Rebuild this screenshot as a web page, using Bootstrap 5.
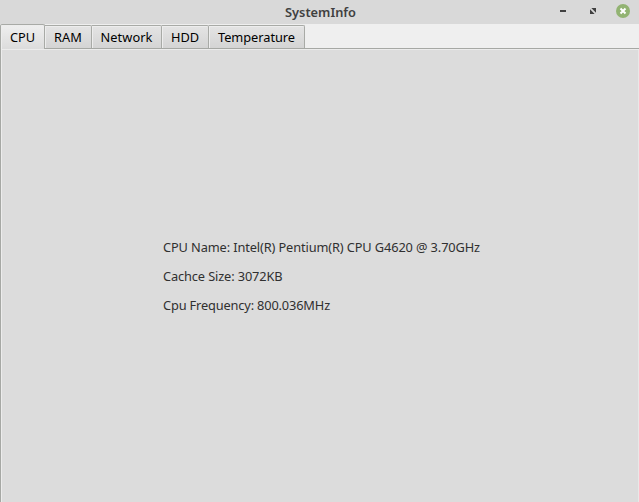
<!DOCTYPE html>
<html lang="en">
<head>
<meta charset="utf-8">
<meta name="viewport" content="width=device-width, initial-scale=1">
<title>SystemInfo</title>
<link href="https://cdn.jsdelivr.net/npm/bootstrap@5.3.0/dist/css/bootstrap.min.css" rel="stylesheet">
<style>
body{font-family:"Noto Sans","Open Sans",sans-serif;font-size:12.8px;line-height:17px;background:#dcdcdc;color:#303030;overflow:hidden}
.titlebar{height:24px;flex:none;background:#d9d9d9;display:grid;grid-template-columns:1fr auto 1fr;padding-left:2px}
.titlebar h1{font-size:12.8px;line-height:24px;font-weight:600;color:#404040}
.window-controls svg{display:block}
.app-tabs{height:25px;flex:none;background:#efefef;border-bottom:1px solid #a6a8a4}
.app-tabs .nav-link{height:23px;margin:1px 0 0;padding:0;border:1px solid #a8aaa6;border-left-width:0;border-bottom:0;border-radius:0 2px 0 0;color:#000;text-align:center;line-height:23px;background:linear-gradient(#e4e4e4,#d4d4d4);box-shadow:inset 1px 1px #ededed;white-space:nowrap}
.app-tabs .nav-link.active{height:25px;margin:0;border:1px solid #a8aaa6;border-bottom:0;border-radius:2px 2px 0 0;color:#000;background:linear-gradient(#efefef,#dcdcdc);line-height:25px;position:relative}
.w-cpu{width:45px}.w-ram{width:47px}.w-network{width:70px}.w-hdd{width:47px}.w-temperature{width:96px}
.info-pane{border-left:1px solid #a6a8a4;box-shadow:inset 1px 1px #ececec,inset -1px 0 #e8e8e8;padding:190px 0 0 162px}
.info-pane p{white-space:nowrap;margin:0 0 12px}
</style>
<script src="https://cdn.jsdelivr.net/npm/bootstrap@5.3.0/dist/js/bootstrap.bundle.min.js"></script>
</head>
<body class="d-flex flex-column vh-100">
<header class="titlebar">
  <span></span>
  <h1 class="m-0"><span class="fit" data-w="71">SystemInfo</span></h1>
  <div class="window-controls d-flex justify-content-end">
    <svg width="99" height="24" viewBox="0 0 99 24" role="img" aria-label="Window controls">
      <rect x="20" y="10" width="6" height="2" fill="#404040"/>
      <path d="M51.300 8H56v4.700zM50 9.300l4.700 4.700H50z" fill="#404040"/>
      <circle cx="83" cy="11" r="7" fill="#92b372"/>
      <path d="m80.500 8.500 5 5m0-5-5 5" stroke="#fff" stroke-width="2" fill="none"/>
    </svg>
  </div>
</header>
<nav>
  <div class="nav app-tabs flex-nowrap align-items-start" role="tablist">
    <button class="nav-link active w-cpu" role="tab"><span class="fit" data-w="25">CPU</span></button>
    <button class="nav-link w-ram" role="tab"><span class="fit" data-w="28">RAM</span></button>
    <button class="nav-link w-network" role="tab"><span class="fit" data-w="52">Network</span></button>
    <button class="nav-link w-hdd" role="tab"><span class="fit" data-w="28">HDD</span></button>
    <button class="nav-link w-temperature" role="tab"><span class="fit" data-w="77">Temperature</span></button>
  </div>
</nav>
<main class="info-pane flex-grow-1 d-flex flex-column align-items-start">
  <p><span class="fit" data-w="317">CPU Name: Intel(R) Pentium(R) CPU G4620 @ 3.70GHz</span></p>
  <p><span class="fit" data-w="119.5">Cachce Size: 3072KB</span></p>
  <p><span class="fit" data-w="167">Cpu Frequency: 800.036MHz</span></p>
</main>
<script>
// Track each label to its intended width, whatever font is in use.
document.querySelectorAll('.fit').forEach(el => {
  const n = el.textContent.length, w = el.getBoundingClientRect().width;
  el.style.letterSpacing = (el.dataset.w - w) / n + 'px';
});
</script>
</body>
</html>
